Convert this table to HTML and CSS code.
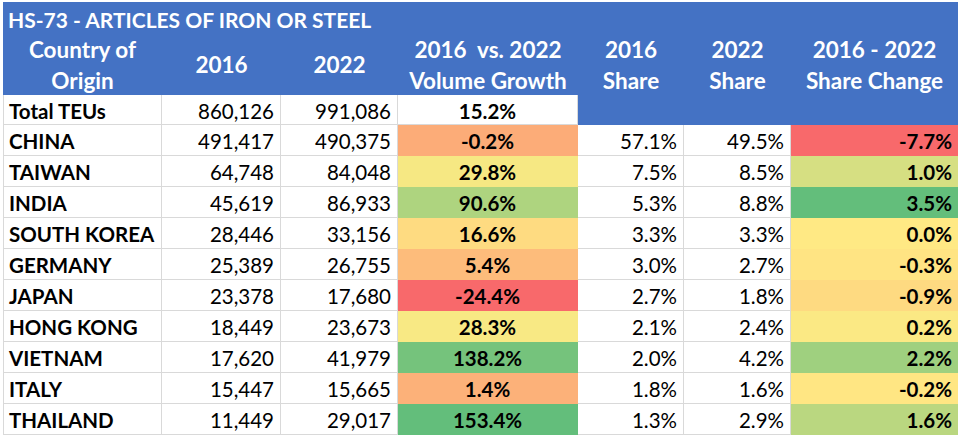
FILE: index.html
```html
<!DOCTYPE html>
<html>
<head>
<meta charset="utf-8">
<link rel="stylesheet" href="styles.css">
</head>
<body>
<div class="sheet">
  <div class="cell title">HS-73 - ARTICLES OF IRON OR STEEL</div>

  <div class="cell hd first">Country of<br>Origin</div>
  <div class="cell hd">2016</div>
  <div class="cell hd">2022</div>
  <div class="cell hd">2016&nbsp; vs. 2022<br>Volume Growth</div>
  <div class="cell hd">2016<br>Share</div>
  <div class="cell hd">2022<br>Share</div>
  <div class="cell hd">2016 - 2022<br>Share Change</div>

  <div class="cell name first">Total TEUs</div>
  <div class="cell num">860,126</div>
  <div class="cell num">991,086</div>
  <div class="cell pct">15.2%</div>
  <div class="cell blank"></div>
  <div class="cell blank"></div>
  <div class="cell blank"></div>

  <div class="cell name first">CHINA</div>
  <div class="cell num">491,417</div>
  <div class="cell num">490,375</div>
  <div class="cell pct c-fcac78">-0.2%</div>
  <div class="cell num">57.1%</div>
  <div class="cell num">49.5%</div>
  <div class="cell chg c-f8696b">-7.7%</div>

  <div class="cell name first">TAIWAN</div>
  <div class="cell num">64,748</div>
  <div class="cell num">84,048</div>
  <div class="cell pct c-f6e883">29.8%</div>
  <div class="cell num">7.5%</div>
  <div class="cell num">8.5%</div>
  <div class="cell chg c-d6df82">1.0%</div>

  <div class="cell name first">INDIA</div>
  <div class="cell num">45,619</div>
  <div class="cell num">86,933</div>
  <div class="cell pct c-aed47f">90.6%</div>
  <div class="cell num">5.3%</div>
  <div class="cell num">8.8%</div>
  <div class="cell chg c-63be7b">3.5%</div>

  <div class="cell name first">SOUTH KOREA</div>
  <div class="cell num">28,446</div>
  <div class="cell num">33,156</div>
  <div class="cell pct c-fedb81">16.6%</div>
  <div class="cell num">3.3%</div>
  <div class="cell num">3.3%</div>
  <div class="cell chg c-ffe984">0.0%</div>

  <div class="cell name first">GERMANY</div>
  <div class="cell num">25,389</div>
  <div class="cell num">26,755</div>
  <div class="cell pct c-fdbc7b">5.4%</div>
  <div class="cell num">3.0%</div>
  <div class="cell num">2.7%</div>
  <div class="cell chg c-ffe483">-0.3%</div>

  <div class="cell name first">JAPAN</div>
  <div class="cell num">23,378</div>
  <div class="cell num">17,680</div>
  <div class="cell pct c-f8696b">-24.4%</div>
  <div class="cell num">2.7%</div>
  <div class="cell num">1.8%</div>
  <div class="cell chg c-feda81">-0.9%</div>

  <div class="cell name first">HONG KONG</div>
  <div class="cell num">18,449</div>
  <div class="cell num">23,673</div>
  <div class="cell pct c-f8e984">28.3%</div>
  <div class="cell num">2.1%</div>
  <div class="cell num">2.4%</div>
  <div class="cell chg c-fbe984">0.2%</div>

  <div class="cell name first">VIETNAM</div>
  <div class="cell num">17,620</div>
  <div class="cell num">41,979</div>
  <div class="cell pct c-75c37c">138.2%</div>
  <div class="cell num">2.0%</div>
  <div class="cell num">4.2%</div>
  <div class="cell chg c-9fd07f">2.2%</div>

  <div class="cell name first">ITALY</div>
  <div class="cell num">15,447</div>
  <div class="cell num">15,665</div>
  <div class="cell pct c-fcb179">1.4%</div>
  <div class="cell num">1.8%</div>
  <div class="cell num">1.6%</div>
  <div class="cell chg c-ffe683">-0.2%</div>

  <div class="cell name first">THAILAND</div>
  <div class="cell num">11,449</div>
  <div class="cell num">29,017</div>
  <div class="cell pct c-63be7b">153.4%</div>
  <div class="cell num">1.3%</div>
  <div class="cell num">2.9%</div>
  <div class="cell chg c-bad780">1.6%</div>
</div>
</body>
</html>
```

FILE: styles.css
```css
html, body {
  margin: 0;
  padding: 0;
  background: #ffffff;
}

body {
  font-family: Lato, "Open Sans", "Noto Sans", sans-serif;
  color: #000000;
}

.sheet {
  display: grid;
  grid-template-columns: 159px 119px 117px 180px 106px 107px 167px;
  grid-template-rows: 32px 61px 30px repeat(10, 31px);
  margin: 2px 0 0 3px;
  width: 955px;
}

.cell {
  box-sizing: border-box;
  display: flex;
  align-items: center;
  font-size: 20.5px;
  line-height: 1;
  border-right: 1px solid #d9d9d9;
  border-bottom: 1px solid #d9d9d9;
  padding: 3px 6px 0 6px;
  white-space: nowrap;
}

.first {
  border-left: 1px solid #d9d9d9;
}

.title {
  grid-column: 1 / span 7;
  background: #4472c4;
  color: #ffffff;
  font-weight: 700;
  font-size: 21px;
  border: none;
  padding: 2px 0 0 5px;
}

.hd {
  background: #4472c4;
  color: #ffffff;
  font-weight: 700;
  font-size: 22.5px;
  line-height: 31px;
  justify-content: center;
  text-align: center;
  border: none;
  padding: 0;
}

.blank {
  background: #4472c4;
  border: none;
}

.name {
  font-weight: 700;
  padding-left: 5px;
}

.num {
  justify-content: flex-end;
}

.pct {
  justify-content: center;
  font-weight: 700;
}

.chg {
  justify-content: flex-end;
  font-weight: 700;
  padding-right: 5px;
}

.c-f8696b { background: #f8696b; border-color: #f8696b; }
.c-fcac78 { background: #fcac78; border-color: #fcac78; }
.c-f6e883 { background: #f6e883; border-color: #f6e883; }
.c-aed47f { background: #aed47f; border-color: #aed47f; }
.c-fedb81 { background: #fedb81; border-color: #fedb81; }
.c-fdbc7b { background: #fdbc7b; border-color: #fdbc7b; }
.c-f8e984 { background: #f8e984; border-color: #f8e984; }
.c-75c37c { background: #75c37c; border-color: #75c37c; }
.c-fcb179 { background: #fcb179; border-color: #fcb179; }
.c-63be7b { background: #63be7b; border-color: #63be7b; }
.c-d6df82 { background: #d6df82; border-color: #d6df82; }
.c-ffe984 { background: #ffe984; border-color: #ffe984; }
.c-ffe483 { background: #ffe483; border-color: #ffe483; }
.c-feda81 { background: #feda81; border-color: #feda81; }
.c-fbe984 { background: #fbe984; border-color: #fbe984; }
.c-9fd07f { background: #9fd07f; border-color: #9fd07f; }
.c-ffe683 { background: #ffe683; border-color: #ffe683; }
.c-bad780 { background: #bad780; border-color: #bad780; }
```
